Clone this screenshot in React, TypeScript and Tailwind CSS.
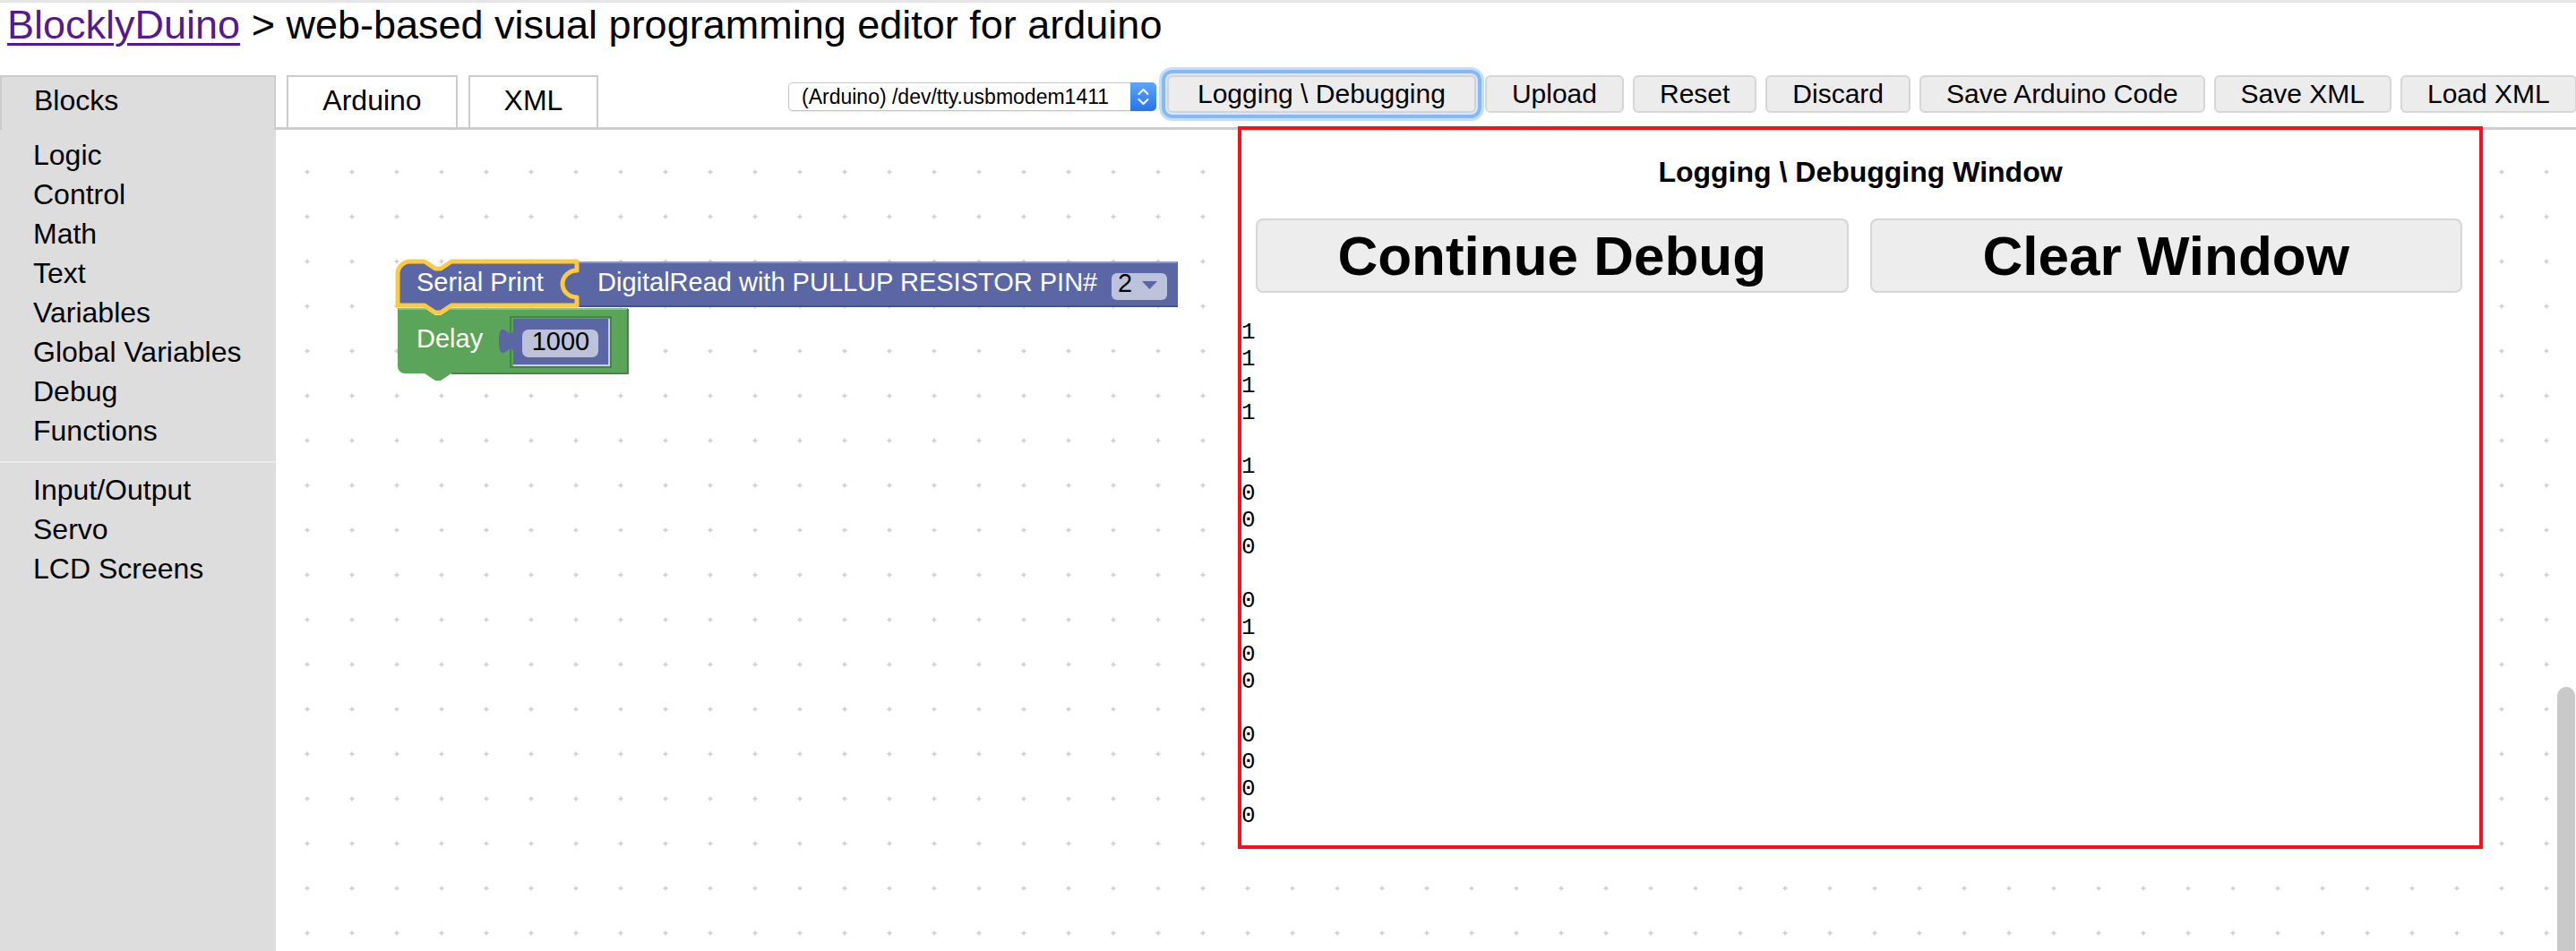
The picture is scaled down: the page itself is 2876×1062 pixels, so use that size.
import React from 'react';

const CATEGORIES = ['Logic', 'Control', 'Math', 'Text', 'Variables', 'Global Variables', 'Debug', 'Functions'];
const EXTRA_CATEGORIES = ['Input/Output', 'Servo', 'LCD Screens'];
const ACTIONS = ['Upload', 'Reset', 'Discard', 'Save Arduino Code', 'Save XML', 'Load XML'];
const LOG = ['1', '1', '1', '1', '', '1', '0', '0', '0', '', '0', '1', '0', '0', '', '0', '0', '0', '0'];

const PURPLE = '#5b67a5';
const GREEN = '#5ba55b';
const FIELD = '#bdc2db';

// dotted "+" grid of the blockly workspace
const WorkspaceGrid = () => (
  <svg className="absolute inset-0 h-full w-full">
    <defs>
      <pattern id="ws-grid" x="10" y="22" width="50" height="50" patternUnits="userSpaceOnUse">
        <path d="M22.5 25h5M25 22.5v5" stroke="#cccccc" strokeWidth="1.5" />
      </pattern>
    </defs>
    <rect width="100%" height="100%" fill="url(#ws-grid)" />
  </svg>
);

const BlockText = ({ x, y, children, color = '#ffffff', anchor }: { x: number; y: number; children: React.ReactNode; color?: string; anchor?: 'middle' }) => (
  <text x={x} y={y} fill={color} fontSize="29" fontFamily="'Liberation Sans', Arial, sans-serif" textAnchor={anchor}>
    {children}
  </text>
);

const Blocks = () => (
  <svg className="absolute left-[122px] top-[135px]" width="900" height="160" viewBox="0 0 900 160">
    {/* delay block */}
    <path d="M14,64 H44 l12,8 h6 l12,-8 H271 V137 H74 l-12,8 h-6 l-12,-8 H22 A8,8 0 0 1 14,129 Z" fill={GREEN} />
    <path d="M15,65 H270" stroke="#8cc08c" strokeWidth="2" />
    <path d="M74,137 H271 V65" stroke="#468446" strokeWidth="2" fill="none" />
    <rect x="140" y="74" width="112" height="56" fill="none" stroke="#468446" strokeWidth="2" />
    <BlockText x={35} y={108}>Delay</BlockText>

    {/* number value */}
    <path d="M143,76 H250 V128 H143 V116 C143,96 127,132 127,101 C127,70 143,106 143,86 Z" fill={PURPLE} />
    <path d="M143,128 H250 V76" stroke="#e9ebf3" strokeWidth="1.5" fill="none" />
    <rect x="153" y="88" width="85" height="31" rx="7" fill={FIELD} />
    <BlockText x={196} y={111} color="#000000" anchor="middle">1000</BlockText>

    {/* digital read block */}
    <path d="M216,12 H885 V63 H216 V52 C207,52 200,45 200,37 C200,29 207,22 216,22 Z" fill={PURPLE} />
    <path d="M217,13 H884" stroke="#8c95c0" strokeWidth="2" />
    <path d="M217,62 H885" stroke="#465190" strokeWidth="2" />
    <BlockText x={237} y={45}>DigitalRead with PULLUP RESISTOR PIN#</BlockText>
    <rect x="811" y="25" width="62" height="30" rx="6" fill={FIELD} />
    <BlockText x={818} y={46} color="#000000">2</BlockText>
    <path d="M845,34 H862 L853.5,43 Z" fill={PURPLE} />

    {/* serial print block (selected) */}
    <path
      d="M14,26 A14,14 0 0 1 28,12 H44 l12,8 h6 l12,-8 H214 V22 C205,22 198,29 198,37 C198,45 205,52 214,52 V61 H74 l-12,8 h-6 l-12,-8 H14 Z"
      fill={PURPLE}
      stroke="#fcc93f"
      strokeWidth="5"
      strokeLinejoin="round"
    />
    <BlockText x={35} y={45}>Serial Print</BlockText>
  </svg>
);

const LogWindow = () => (
  <div className="absolute left-[1074px] top-[57px] h-[807px] w-[1390px] border-4 border-[#f8101c] bg-white">
    <div className="pt-[29px] text-center text-[32px] font-bold leading-[36px]">Logging \ Debugging Window</div>
    <div className="mt-[34px] grid grid-cols-2 gap-[24px] pl-[16px] pr-[19px]">
      {['Continue Debug', 'Clear Window'].map((label) => (
        <button
          key={label}
          className="flex h-[83px] items-center justify-center rounded-[8px] border-2 border-[#d6d6d6] bg-[#ededed] text-[62px] font-bold leading-none"
        >
          {label}
        </button>
      ))}
    </div>
    <div className="mt-[29px] font-['Liberation_Mono',monospace] text-[26px] leading-[30px]">
      {LOG.map((line, i) => (
        <div key={i} className="h-[30px]">
          {line || '\u00a0'}
        </div>
      ))}
    </div>
  </div>
);

const PortSelect = () => (
  <div className="ml-[212px] mt-[8px] flex h-[32px] w-[411px] shrink-0 items-center rounded-[5px] border border-[#c6c6c6] bg-white shadow-[0_1px_1px_rgba(0,0,0,0.08)]">
    <span className="flex-1 whitespace-nowrap pl-[14px] text-[23px] leading-none">(Arduino) /dev/tty.usbmodem1411</span>
    <span className="-my-px -mr-px flex h-[32px] w-[29px] items-center justify-center rounded-r-[5px] bg-linear-to-b from-[#5ea5f9] to-[#2574ea]">
      <svg width="29" height="32" viewBox="0 0 29 32">
        <path d="M9.5 13 L14.5 8 L19.5 13 M9.5 19 L14.5 24 L19.5 19" stroke="#ffffff" strokeWidth="2" fill="none" strokeLinecap="round" strokeLinejoin="round" />
      </svg>
    </span>
  </div>
);

const App = () => {
  return (
    <div className="relative flex h-[1062px] w-[2876px] flex-col overflow-hidden border-t-[3px] border-[#e6e6e6] bg-white font-['Liberation_Sans',Arial,sans-serif] text-black">
      <div className="h-[81px] shrink-0 pl-[8px] text-[45px] leading-[50px] whitespace-nowrap">
        <a className="text-[#551a8b] underline decoration-[3px] underline-offset-[5px]">BlocklyDuino</a>
        <span> &gt; web-based visual programming editor for arduino</span>
      </div>

      <div className="flex flex-1">
        {/* toolbox */}
        <div className="flex w-[308px] shrink-0 flex-col bg-[#dddddd]">
          <div className="h-[61px] border-2 border-b-0 border-[#cccccc] pl-[36px] pt-[4px] text-[32px] leading-[44px]">Blocks</div>
          <div className="pl-[37px] pt-[6px] text-[32px] leading-[44px]">
            {CATEGORIES.map((c) => (
              <div key={c}>{c}</div>
            ))}
          </div>
          <div className="mt-[12px] h-[2px] bg-[#ebebeb]" />
          <div className="pl-[37px] pt-[8px] text-[32px] leading-[44px]">
            {EXTRA_CATEGORIES.map((c) => (
              <div key={c}>{c}</div>
            ))}
          </div>
        </div>

        <div className="relative flex flex-1 flex-col">
          <div className="flex h-[58px] shrink-0 items-start whitespace-nowrap">
            <div className="ml-[12px] h-[58px] w-[191px] shrink-0 border-2 border-b-0 border-[#cccccc] pt-[4px] text-center text-[32px] leading-[44px]">Arduino</div>
            <div className="ml-[12px] h-[58px] w-[145px] shrink-0 border-2 border-b-0 border-[#cccccc] pt-[4px] text-center text-[32px] leading-[44px]">XML</div>
            <PortSelect />
            <button className="ml-[12px] h-[42px] shrink-0 rounded-[6px] border-2 border-[#d3d3d3] bg-[#ececec] px-[32px] text-[30px] leading-[38px] shadow-[0_0_0_2px_#d8e7fb,0_0_0_6px_#86b8f5,0_0_0_9px_#c4ddfb]">
              Logging \ Debugging
            </button>
            <div className="ml-[10px] flex shrink-0 gap-[10px]">
              {ACTIONS.map((a) => (
                <button
                  key={a}
                  className="h-[42px] shrink-0 rounded-[6px] border-2 border-[#d6d6d6] bg-[#ececec] px-[28px] text-[30px] leading-[38px]"
                >
                  {a}
                </button>
              ))}
            </div>
          </div>

          <div className="relative flex-1 overflow-hidden border-t-[3px] border-[#cccccc]">
            <WorkspaceGrid />
            <Blocks />
          </div>

          <LogWindow />
          <div className="absolute right-[2px] top-[683px] bottom-0 w-[20px] rounded-t-full bg-[#c9c9c9]" />
        </div>
      </div>
    </div>
  );
};

export default App;
